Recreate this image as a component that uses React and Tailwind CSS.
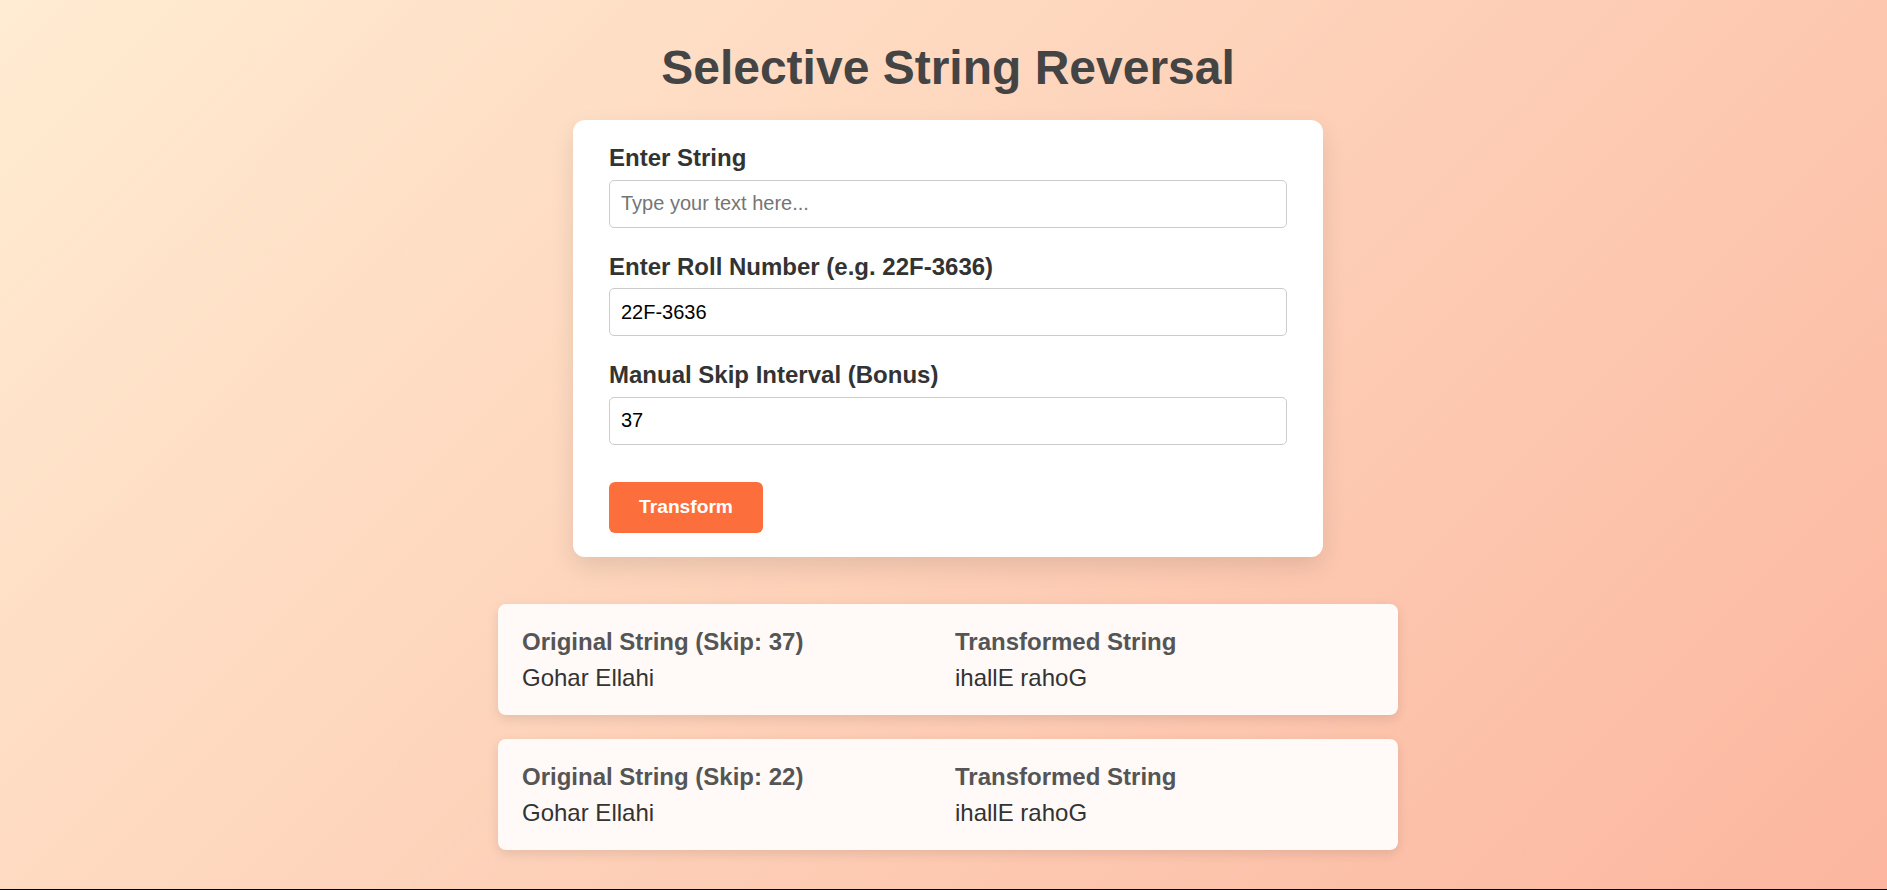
import { useState } from 'react'

const RESULTS = [
  { skip: 37, original: 'Gohar Ellahi', transformed: 'ihallE rahoG' },
  { skip: 22, original: 'Gohar Ellahi', transformed: 'ihallE rahoG' },
]

function Field({ label, value, onChange, placeholder }) {
  return (
    <div className="mb-[25px]">
      <label className="block text-[24px] leading-[1.15] font-bold text-[#333] mb-[8px]">{label}</label>
      <input
        type="text"
        value={value}
        placeholder={placeholder}
        onChange={e => onChange(e.target.value)}
        className="block w-full h-12 px-[11px] text-[20px] text-black border border-[#ccc] rounded-[5px] bg-white outline-none placeholder:text-[#757575]"
      />
    </div>
  )
}

export default function App() {
  const [text, setText] = useState('')
  const [roll, setRoll] = useState('22F-3636')
  const [skip, setSkip] = useState('37')

  return (
    <div
      className="min-h-screen border-b border-black bg-[linear-gradient(135deg,#ffecd2_0%,#fcb69f_100%)] pt-[40px] pl-[9px] flex flex-col items-center"
      style={{ fontFamily: '"Liberation Sans", Arial, sans-serif' }}
    >
      <h1 className="text-[48px] leading-[1.15] font-bold text-[#444] mb-[25px]">Selective String Reversal</h1>

      <div className="w-[750px] bg-white rounded-xl shadow-[0_10px_25px_rgba(0,0,0,0.1)] px-9 pt-6 pb-6">
        <Field label="Enter String" value={text} onChange={setText} placeholder="Type your text here..." />
        <Field label="Enter Roll Number (e.g. 22F-3636)" value={roll} onChange={setRoll} />
        <Field label="Manual Skip Interval (Bonus)" value={skip} onChange={setSkip} />
        <button className="mt-[12px] w-[154px] h-[51px] rounded-[6px] bg-[#fc6f3c] text-white text-[19.2px] font-bold">
          Transform
        </button>
      </div>

      <div className="mt-[47px] w-[900px] flex flex-col gap-6">
        {RESULTS.map((r, i) => (
          <div key={i} className="bg-[#fffaf8] rounded-lg shadow-[0_4px_12px_rgba(0,0,0,0.1)] p-6 grid grid-cols-2 gap-x-[14px]">
            <div>
              <p className="text-[24px] leading-[1.15] font-bold text-[#555] mb-[8px]">Original String (Skip: {r.skip})</p>
              <p className="text-[24px] leading-[1.15] text-[#333]">{r.original}</p>
            </div>
            <div>
              <p className="text-[24px] leading-[1.15] font-bold text-[#555] mb-[8px]">Transformed String</p>
              <p className="text-[24px] leading-[1.15] text-[#333]">{r.transformed}</p>
            </div>
          </div>
        ))}
      </div>
    </div>
  )
}
